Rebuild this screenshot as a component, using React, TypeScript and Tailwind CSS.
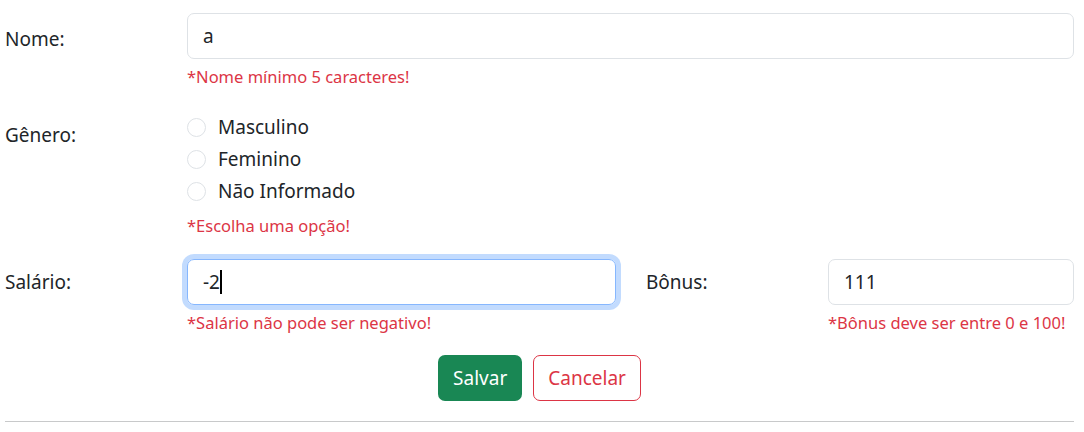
import React from 'react';

const font = { fontFamily: '"Noto Sans", "Open Sans", sans-serif' };

function Radio({ label }: { label: string }) {
  return (
    <label className="flex items-center h-[32px] text-[19px] text-[#212529]">
      <span className="w-[19px] h-[19px] rounded-full border border-[#dee2e6] bg-white shrink-0" />
      <span className="ml-[12px] leading-[29px]">{label}</span>
    </label>
  );
}

function ErrorText({ children, className = '' }: { children: React.ReactNode; className?: string }) {
  return <div className={`text-[16.5px] leading-[25px] text-[#dc3545] ${className}`}>{children}</div>;
}

export default function App() {
  return (
    <div className="w-[1084px] h-[432px] bg-white pl-[5px] pr-[10px] pt-[13px]" style={font}>
      {/* Nome */}
      <div className="flex">
        <label className="w-[182px] shrink-0 pt-[12px] text-[19px] leading-[29px] text-[#212529]">Nome:</label>
        <div className="flex-1">
          <input
            readOnly
            value="a"
            className="w-full h-[46px] px-[15px] rounded-[7px] border border-[#dee2e6] text-[19px] text-[#212529] outline-none"
          />
          <ErrorText className="mt-[5px]">*Nome mínimo 5 caracteres!</ErrorText>
        </div>
      </div>

      {/* Gênero */}
      <div className="flex mt-[22px]">
        <label className="w-[182px] shrink-0 pt-[10px] text-[19px] leading-[29px] text-[#212529]">Gênero:</label>
        <div className="flex-1">
          <Radio label="Masculino" />
          <Radio label="Feminino" />
          <Radio label="Não Informado" />
          <ErrorText className="mt-[6px]">*Escolha uma opção!</ErrorText>
        </div>
      </div>

      {/* Salário / Bônus */}
      <div className="flex mt-[21px]">
        <label className="w-[182px] shrink-0 pt-[9px] text-[19px] leading-[29px] text-[#212529]">Salário:</label>
        <div className="w-[429px] shrink-0">
          <div className="h-[46px] px-[15px] rounded-[7px] border border-[#86b7fe] shadow-[0_0_0_5px_rgba(13,110,253,0.25)] flex items-center text-[19px] text-[#212529]">
            <span>-2</span>
            <span className="w-[1.5px] h-[24px] bg-black" />
          </div>
          <ErrorText className="mt-[5px]">*Salário não pode ser negativo!</ErrorText>
        </div>
        <label className="w-[182px] shrink-0 ml-[30px] pt-[9px] text-[19px] leading-[29px] text-[#212529]">Bônus:</label>
        <div className="flex-1">
          <input
            readOnly
            value="111"
            className="w-full h-[46px] px-[15px] rounded-[7px] border border-[#dee2e6] text-[19px] text-[#212529] outline-none"
          />
          <ErrorText className="mt-[5px]">*Bônus deve ser entre 0 e 100!</ErrorText>
        </div>
      </div>

      {/* Botões */}
      <div className="flex justify-center gap-[11px] mt-[20px]">
        <button className="h-[46px] px-[15px] rounded-[7px] bg-[#198754] text-white text-[19px]">Salvar</button>
        <button className="h-[46px] px-[14px] rounded-[7px] border border-[#dc3545] text-[#dc3545] text-[19px] bg-white">
          Cancelar
        </button>
      </div>

      <hr className="mt-[20px] border-t border-[#c8c9ca]" />
    </div>
  );
}
